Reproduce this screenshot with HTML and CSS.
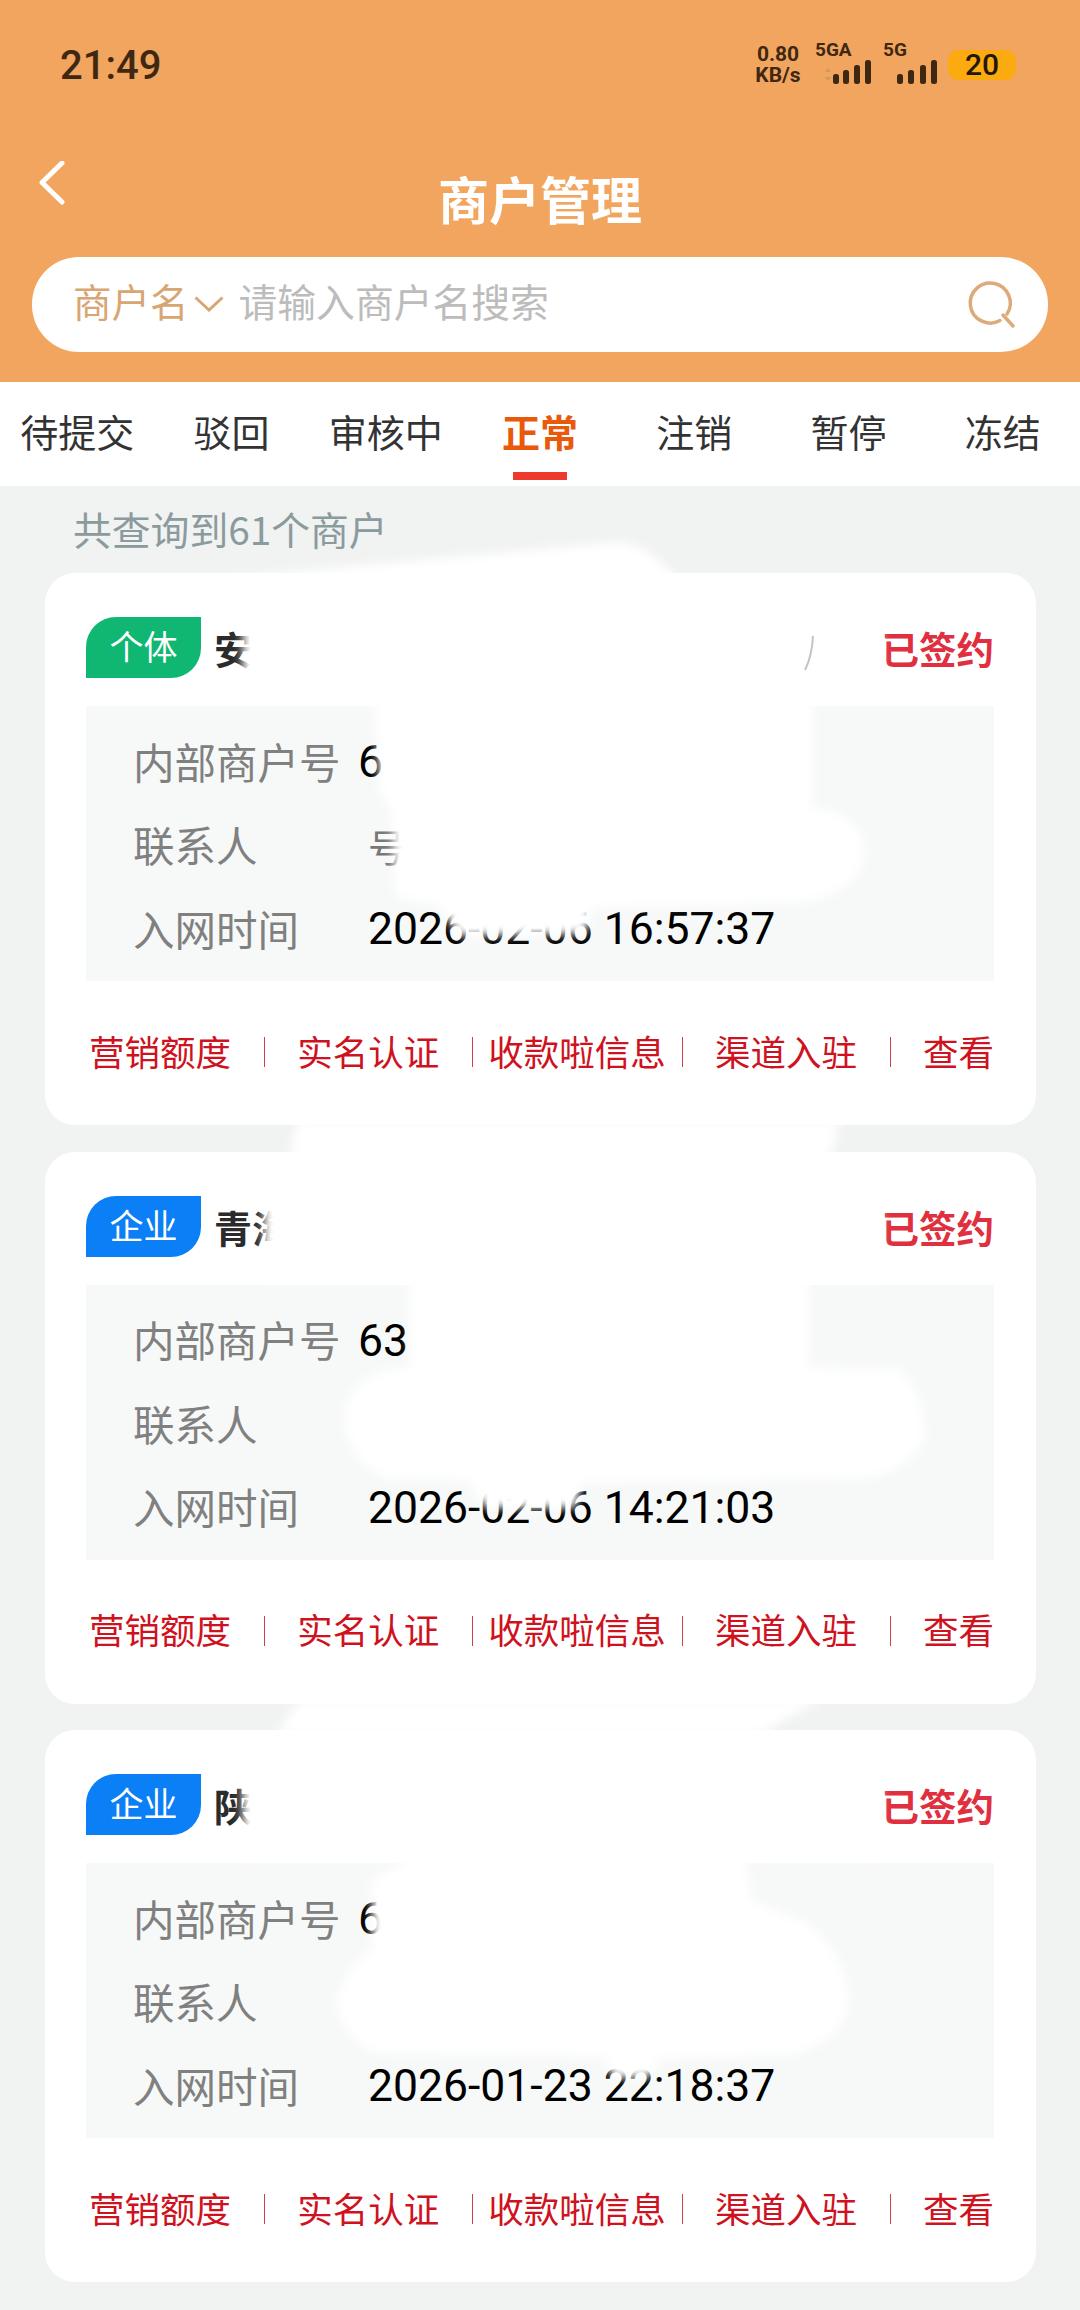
FILE: index.html
```html
<!DOCTYPE html>
<html lang="zh-CN">
<head>
  <title>商户管理</title>
  <meta name="viewport" content="width=device-width, initial-scale=1.0">
  <link rel="stylesheet" href="styles.css">
</head>
<body>
  <div class="page">
    <div class="header">
      <div class="statusbar">
        <span class="clock">21:49</span>
        <div class="status-right">
          <div class="speed"><span>0.80</span><span>KB/s</span></div>
          <div class="net net-first">
            <span class="net-name">5GA</span>
            <svg class="bars" width="50" height="26" viewBox="0 0 50 26">
              <path class="updown" d="M4 13l3-4 3 4zM4 18l3 4 3-4z"/>
              <rect x="12" y="15" width="6" height="10" rx="2.5"/>
              <rect x="22" y="11" width="6" height="14" rx="2.5"/>
              <rect x="33" y="6" width="6" height="19" rx="2.5"/>
              <rect x="44" y="1" width="6" height="24" rx="2.5"/>
            </svg>
          </div>
          <div class="net">
            <span class="net-name">5G</span>
            <svg class="bars" width="40" height="26" viewBox="0 0 40 26">
              <rect x="0" y="15" width="6" height="10" rx="2.5"/>
              <rect x="11" y="11" width="6" height="14" rx="2.5"/>
              <rect x="23" y="6" width="6" height="19" rx="2.5"/>
              <rect x="34" y="1" width="6" height="24" rx="2.5"/>
            </svg>
          </div>
          <span class="battery">20</span>
        </div>
      </div>

      <div class="navbar">
        <svg class="back" width="26" height="44" viewBox="0 0 26 44">
          <path d="M23 2L3 21.500L23 41"/>
        </svg>
        <h1>商户管理</h1>
      </div>

      <div class="search">
        <span class="search-type">商户名</span>
        <svg class="search-arrow" width="30" height="16" viewBox="0 0 30 16">
          <path d="M1.500 1.500L15 14L28.500 1.500"/>
        </svg>
        <span class="search-hint">请输入商户名搜索</span>
        <svg class="search-icon" width="54" height="54" viewBox="0 0 54 54">
          <path d="M34 43.500A20 20 0 1 1 41 37"/>
          <path d="M37 38L47 49"/>
        </svg>
      </div>
    </div>

    <div class="tabs">
      <div class="tab">待提交</div>
      <div class="tab">驳回</div>
      <div class="tab">审核中</div>
      <div class="tab tab-active">正常</div>
      <div class="tab">注销</div>
      <div class="tab">暂停</div>
      <div class="tab">冻结</div>
    </div>

    <div class="count">共查询到61个商户</div>

    <div class="card">
      <div class="card-head">
        <span class="badge badge-green">个体</span>
        <span class="card-title">安</span>
        <span class="card-status">已签约</span>
      </div>
      <div class="info">
        <div class="info-row"><span class="info-label info-label-wide">内部商户号</span><span class="info-value">6</span></div>
        <div class="info-row"><span class="info-label">联系人</span><span class="info-value info-name">号</span></div>
        <div class="info-row"><span class="info-label">入网时间</span><span class="info-value">2026-02-06 16:57:37</span></div>
      </div>
      <div class="actions">
        <span>营销额度</span><i></i><span>实名认证</span><i></i><span class="action-wide">收款啦信息</span><i></i><span>渠道入驻</span><i></i><span>查看</span>
      </div>
    </div>

    <div class="card">
      <div class="card-head">
        <span class="badge badge-blue">企业</span>
        <span class="card-title">青海</span>
        <span class="card-status">已签约</span>
      </div>
      <div class="info">
        <div class="info-row"><span class="info-label info-label-wide">内部商户号</span><span class="info-value">63</span></div>
        <div class="info-row"><span class="info-label">联系人</span></div>
        <div class="info-row"><span class="info-label">入网时间</span><span class="info-value">2026-02-06 14:21:03</span></div>
      </div>
      <div class="actions">
        <span>营销额度</span><i></i><span>实名认证</span><i></i><span class="action-wide">收款啦信息</span><i></i><span>渠道入驻</span><i></i><span>查看</span>
      </div>
    </div>

    <div class="card">
      <div class="card-head">
        <span class="badge badge-blue">企业</span>
        <span class="card-title">陕</span>
        <span class="card-status">已签约</span>
      </div>
      <div class="info">
        <div class="info-row"><span class="info-label info-label-wide">内部商户号</span><span class="info-value">6</span></div>
        <div class="info-row"><span class="info-label">联系人</span></div>
        <div class="info-row"><span class="info-label">入网时间</span><span class="info-value">2026-01-23 22:18:37</span></div>
      </div>
      <div class="actions">
        <span>营销额度</span><i></i><span>实名认证</span><i></i><span class="action-wide">收款啦信息</span><i></i><span>渠道入驻</span><i></i><span>查看</span>
      </div>
    </div>

    <!-- white paint-over hiding merchant details -->
    <svg class="smudges" width="1080" height="2310" viewBox="0 0 1080 2310">
      <defs>
        <filter id="soft" x="-10%" y="-10%" width="120%" height="120%">
          <feGaussianBlur stdDeviation="5"/>
        </filter>
      </defs>
      <g fill="#fff" filter="url(#soft)">
        <path d="M227 578L400 562L620 542Q650 545 680 582L880 600L880 690L812 700L812 808Q862 815 864 850Q862 892 800 902L592 908L586 934L458 936L440 906L396 896L392 812L380 790L374 700L243 690L243 612L227 600Z"/>
        <path d="M296 1122L840 1122L830 1158L290 1158Z"/>
        <path d="M264 1190L880 1190L880 1280L808 1280L808 1368L900 1370Q926 1400 924 1440Q900 1476 860 1478L582 1482L576 1508L484 1508L470 1480L386 1478Q346 1460 344 1410Q352 1385 380 1372L410 1368L410 1280L264 1280Z"/>
        <path d="M300 1700L820 1700L760 1734L276 1734Z"/>
        <path d="M243 1770L880 1770L880 1858L746 1858L750 1900L810 1925Q848 1960 848 2000Q846 2040 792 2054L660 2058L650 2078L612 2078L604 2056L372 2052Q338 2030 337 2000Q345 1970 372 1950L372 1880L414 1858L243 1858Z"/>
      </g>
      <path class="leftover" d="M813 636Q812 656 805 670"/>
    </svg>
  </div>
</body>
</html>
```

FILE: styles.css
```css
* {
  margin: 0;
  padding: 0;
  box-sizing: border-box;
}

body {
  font-family: 'Noto Sans CJK SC', 'Noto Sans', sans-serif;
  background: #f1f2f2;
}

.page {
  position: relative;
  width: 1080px;
  height: 2310px;
  overflow: hidden;
}

.header {
  height: 382px;
  background: #f2a55f;
  padding-bottom: 30px;
}

.statusbar {
  height: 130px;
  padding: 0 64px 0 60px;
  display: flex;
  align-items: center;
  justify-content: space-between;
  font-family: Roboto, 'Noto Sans', sans-serif;
  color: #3f2812;
}

.clock {
  font-size: 40px;
  font-weight: 500;
}

.status-right {
  display: flex;
  align-items: center;
}

.speed {
  display: flex;
  flex-direction: column;
  align-items: center;
  width: 48px;
  margin-right: 19px;
  font-size: 21px;
  font-weight: 700;
  line-height: 21px;
}

.net {
  position: relative;
  margin-right: 11px;
  height: 40px;
  display: flex;
  align-items: flex-end;
}

.net-first {
  margin-right: 26px;
}

.net-name {
  position: absolute;
  left: 0;
  top: -5px;
  font-size: 19px;
  font-weight: 700;
  line-height: 20px;
}

.net-first .net-name {
  left: -6px;
}

.net .bars {
  fill: #3f2812;
  display: block;
}

.net:not(.net-first) .net-name {
  left: -14px;
}

.updown {
  fill: #c79a66;
}

.battery {
  width: 68px;
  height: 30px;
  background: #fbab0f;
  border-radius: 10px;
  color: #24160a;
  font-size: 30px;
  font-weight: 500;
  line-height: 30px;
  text-align: center;
}

.navbar {
  height: 127px;
  display: flex;
  justify-content: center;
  position: relative;
}

.navbar h1 {
  color: #fff;
  font-size: 51px;
  font-weight: 700;
  line-height: 60px;
  margin-top: 38px;
}

.back {
  position: absolute;
  left: 39px;
  top: 31px;
  fill: none;
  stroke: #fff;
  stroke-width: 5;
  stroke-linecap: round;
  stroke-linejoin: round;
}

.search {
  height: 95px;
  margin: 0 32px;
  padding: 0 28px 0 41px;
  background: #fff;
  border-radius: 47px;
  display: flex;
  align-items: center;
}

.search-type {
  margin-top: -9px;
  color: #d7a672;
  font-size: 38.500px;
}

.search-arrow {
  margin: -2px 15px 0 5px;
  fill: none;
  stroke: #d7a672;
  stroke-width: 3;
}

.search-hint {
  flex: 1;
  margin-top: -9px;
  color: #bcbcbc;
  font-size: 38.800px;
}

.search-icon {
  margin-top: -2px;
  fill: none;
  stroke: #dcab79;
  stroke-width: 3.500;
  stroke-linecap: round;
}

.tabs {
  height: 104px;
  background: #fff;
  display: flex;
}

.tab {
  flex: 1;
  padding-top: 25px;
  color: #333;
  font-size: 38px;
  line-height: 48px;
  text-align: center;
  white-space: nowrap;
}

.tab-active {
  color: #e8590c;
  font-weight: 700;
}

.tab-active::after {
  content: "";
  display: block;
  width: 54px;
  height: 8px;
  margin: 17px auto 0;
  background: #ee3a2e;
}

.count {
  height: 87px;
  padding-left: 73px;
  color: #8b9b9d;
  font-size: 38.800px;
  line-height: 84px;
}

.card {
  width: 991px;
  height: 552px;
  margin: 0 0 26.500px 45px;
  padding: 44px 42px 0 41px;
  background: #fff;
  border-radius: 30px;
}

.card-head {
  height: 61px;
  margin-bottom: 28px;
  display: flex;
  align-items: center;
}

.badge {
  width: 115px;
  height: 61px;
  border-radius: 30px 0 30px 0;
  color: #fff;
  font-size: 34px;
  line-height: 58px;
  text-align: center;
}

.badge-green {
  background: #0fb772;
}

.badge-blue {
  background: #0b7ff5;
}

.card-title {
  flex: 1;
  margin-left: 13px;
  color: #2b2b2b;
  font-size: 38px;
  font-weight: 700;
}

.card-status {
  color: #e0303f;
  font-size: 37.500px;
  font-weight: 700;
}

.info {
  height: 275px;
  padding: 13px 0 0 47px;
  background: #f7f9f8;
}

.info-row {
  height: 83.500px;
  display: flex;
  align-items: center;
}

.info-label {
  width: 235px;
  color: #808080;
  font-size: 41.500px;
  white-space: nowrap;
}

.info-label-wide {
  width: 225px;
}

.info-value {
  margin-top: 3px;
  color: #000;
  font-family: Roboto, sans-serif;
  font-size: 44.500px;
  white-space: nowrap;
}

.info-name {
  color: #777;
  font-family: 'Noto Sans CJK SC', sans-serif;
  font-size: 38px;
}

.actions {
  height: 52px;
  margin-top: 43px;
  padding-left: 3px;
  display: flex;
  align-items: center;
  gap: 33px;
  color: #cf1220;
  font-size: 35.500px;
  white-space: nowrap;
}

.actions i {
  width: 3px;
  height: 30px;
  margin-top: 4px;
  background: #cc4048;
}

.action-wide {
  margin: 0 -17px;
}

.smudges {
  position: absolute;
  left: 0;
  top: 0;
}

.leftover {
  fill: none;
  stroke: #c4c4c4;
  stroke-width: 2;
}
```
